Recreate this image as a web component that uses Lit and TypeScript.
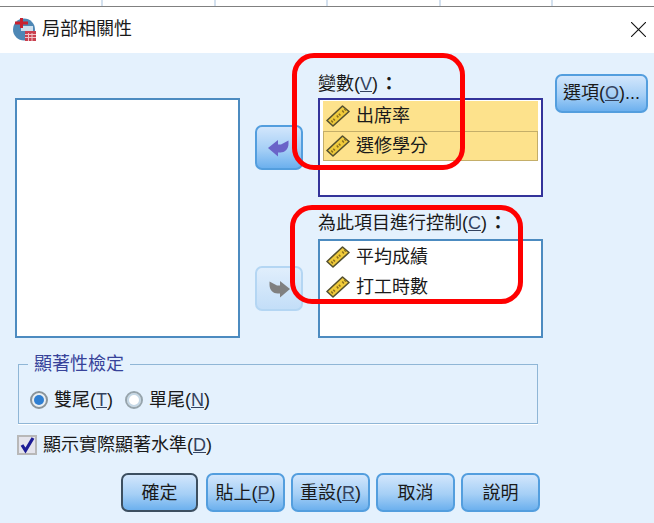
import { LitElement, html, css, svg } from 'lit'
import { customElement } from 'lit/decorators.js'

// diagonal ruler, SPSS "scale" measure icon
const ruler = html`<svg class="ruler" width="24" height="22" viewBox="0 0 24 22">
  <path d="M1 15.500 L16.500 1 L23 6.500 L7 21 Z" fill="#f0cb3c" stroke="#54502f" stroke-width="1.600" stroke-linejoin="round"/>
  <path d="M5.500 17L9 13.800M11 12L14.500 8.800M16.500 7L19.500 4.300" stroke="#8a6f1c" stroke-width="2.400" stroke-dasharray="1.500 1.300" fill="none"/>
</svg>`

const arrowShape = svg`<path d="M0 9 L10 1 V5.500 H13 L20.500 1.500 V5 C20.500 10 16.500 13.500 12.500 13.500 H10 V17.500 Z"/>`

@customElement('app-root')
export class AppRoot extends LitElement {
  static styles = css`
    :host {
      display: block;
      width: 654px;
      height: 523px;
      overflow: hidden;
      position: relative;
      font-family: "Liberation Sans", "Noto Sans CJK TC", sans-serif;
      font-size: 18px;
      line-height: 22px;
      color: #1a1a1a;
      background: #e4f1fd;
    }
    u { color: #34435f; }
    .strip {
      display: flex;
      height: 6px;
      background: #fff;
      border-bottom: 1px solid #808080;
    }
    .strip div {
      width: 112.500px;
      flex: none;
      box-sizing: border-box;
      border-right: 2px solid #d3e0ee;
    }
    .strip div:first-child { width: 103px; }
    .titlebar {
      display: flex;
      align-items: center;
      box-sizing: border-box;
      height: 46px;
      background: #fff;
      padding: 0 8px 2px 12px;
    }
    .title {
      margin-left: 6px;
      flex: 1;
    }
    .dialog {
      padding: 21px 0 0 15px;
    }
    .main {
      display: flex;
      align-items: flex-start;
    }
    .list {
      box-sizing: border-box;
      background: #fff;
      border: 2px solid #4c8bc0;
      padding: 1px 3px;
      width: 225px;
      height: 99px;
    }
    .list.source {
      height: 240px;
      margin-top: 24px;
    }
    .list.active {
      border-color: #33339a;
    }
    .movers {
      display: flex;
      flex-direction: column;
      gap: 96px;
      margin: 51px 15px 0;
    }
    .btn {
      box-sizing: border-box;
      display: flex;
      align-items: center;
      justify-content: center;
      border: 2px solid #539ede;
      border-radius: 7px;
      background: linear-gradient(#d2e6fc, #a5cff6 55%, #6cb0ee);
      white-space: nowrap;
    }
    .mover {
      width: 48px;
      height: 45px;
    }
    .mover svg { fill: #6a63c8; }
    .mover.off {
      border-color: #b4d6f3;
      background: linear-gradient(#e0eefc, #c3def8);
    }
    .mover.off svg { fill: #808080; }
    .label {
      height: 24px;
      line-height: 20px;
      white-space: nowrap;
    }
    .label.second { margin-top: 16px; height: 26px; }
    .label b { font-weight: 700; margin-left: 2px; }
    .item {
      display: flex;
      align-items: center;
      height: 30px;
      box-sizing: border-box;
      padding-left: 3px;
      gap: 6px;
    }
    .item span { margin-bottom: 1px; }
    .item.sel { background: #fde28c; }
    .item.focus { border: 1px solid #c4ae69; padding-left: 2px; }
    .options {
      width: 93px;
      height: 39px;
      margin-left: 12px;
      padding-bottom: 1px;
    }
    fieldset {
      margin: 16px 0 0 3px;
      padding: 15px 0 0 11px;
      width: 520px;
      height: 70px;
      box-sizing: border-box;
      border: 1px solid #8fb6d6;
      box-shadow: 0 1px 0 #fff;
      display: flex;
      gap: 12px;
    }
    legend {
      color: #37439a;
      line-height: 20px;
      padding: 0 6px;
      margin-left: -2px;
    }
    .check {
      display: flex;
      align-items: center;
      align-self: flex-start;
      gap: 6px;
    }
    .radio {
      width: 18px;
      height: 18px;
      box-sizing: border-box;
      border-radius: 50%;
      border: 2px solid #8a9499;
      background: #e8eef2;
      display: flex;
      align-items: center;
      justify-content: center;
    }
    .radio i {
      width: 10px;
      height: 10px;
      border-radius: 50%;
      background: #2f7fd2;
    }
    .radio.off { background: #fff; border-color: #96a4ac; box-shadow: inset 0 0 0 2px #c5d8e6; }
    .radio.off i { display: none; }
    .showsig {
      margin: 10px 0 0 2px;
    }
    .box {
      width: 20px;
      height: 20px;
      box-sizing: border-box;
      border: 2px solid #b8b8b8;
      background: #e4e4ec;
      overflow: visible;
    }
    .actions {
      display: flex;
      gap: 6px;
      margin: 17px 0 0 106px;
    }
    .actions .btn {
      width: 79px;
      height: 39px;
    }
    .actions .btn.default {
      width: 77px;
      margin-right: 2px;
      border-color: #3c4f60;
    }
    .mark {
      position: absolute;
      box-sizing: border-box;
      border: 5px solid #ff0000;
      border-radius: 22px;
    }
    .mark.one { left: 292px; top: 53px; width: 173px; height: 117px; }
    .mark.two { left: 290px; top: 205px; width: 233px; height: 99px; }
  `

  render() {
    return html`
      <div class="strip"><div></div><div></div><div></div><div></div><div></div></div>
      <div class="titlebar">
        <svg width="24" height="24" viewBox="0 0 24 24">
          <circle cx="12" cy="12.500" r="11" fill="#4d87b5"/>
          <path d="M9 9h12v5H9z" fill="#cfe0ee"/>
          <path d="M3 6h13M9.500 1v10" stroke="#c8202f" stroke-width="3" fill="none"/>
          <rect x="13" y="14" width="11" height="10" fill="#c9404f"/>
          <path d="M13 17.500h11M13 20.500h11M16.500 16v8M20 16v8" stroke="#f0c4c8" stroke-width="1"/>
        </svg>
        <span class="title">局部相關性</span>
        <svg width="15" height="15" viewBox="0 0 15 15">
          <path d="M0 0L15 15M15 0L0 15" stroke="#111" stroke-width="1.100"/>
        </svg>
      </div>
      <div class="dialog">
        <div class="main">
          <div class="list source"></div>
          <div class="movers">
            <div class="btn mover">
              <svg width="22" height="18" viewBox="0 0 22 18">${arrowShape}</svg>
            </div>
            <div class="btn mover off">
              <svg width="22" height="18" viewBox="0 0 22 18" style="transform: scaleX(-1)">${arrowShape}</svg>
            </div>
          </div>
          <div>
            <div class="label">變數(<u>V</u>)<b>：</b></div>
            <div class="list active">
              <div class="item sel">${ruler}<span>出席率</span></div>
              <div class="item sel focus">${ruler}<span>選修學分</span></div>
            </div>
            <div class="label second">為此項目進行控制(<u>C</u>)<b>：</b></div>
            <div class="list">
              <div class="item">${ruler}<span>平均成績</span></div>
              <div class="item">${ruler}<span>打工時數</span></div>
            </div>
          </div>
          <div class="btn options"><span>選項(<u>O</u>)...</span></div>
        </div>
        <fieldset>
          <legend>顯著性檢定</legend>
          <div class="check"><span class="radio"><i></i></span><span>雙尾(<u>T</u>)</span></div>
          <div class="check"><span class="radio off"><i></i></span><span>單尾(<u>N</u>)</span></div>
        </fieldset>
        <div class="check showsig">
          <svg class="box" viewBox="0 0 16 16">
            <path d="M3 8L6.500 13.500L14 1" stroke="#1c1c96" stroke-width="3.200" fill="none"/>
          </svg>
          <span>顯示實際顯著水準(<u>D</u>)</span>
        </div>
        <div class="actions">
          <div class="btn default">確定</div>
          <div class="btn"><span>貼上(<u>P</u>)</span></div>
          <div class="btn"><span>重設(<u>R</u>)</span></div>
          <div class="btn">取消</div>
          <div class="btn">說明</div>
        </div>
      </div>
      <div class="mark one"></div>
      <div class="mark two"></div>
    `
  }
}
